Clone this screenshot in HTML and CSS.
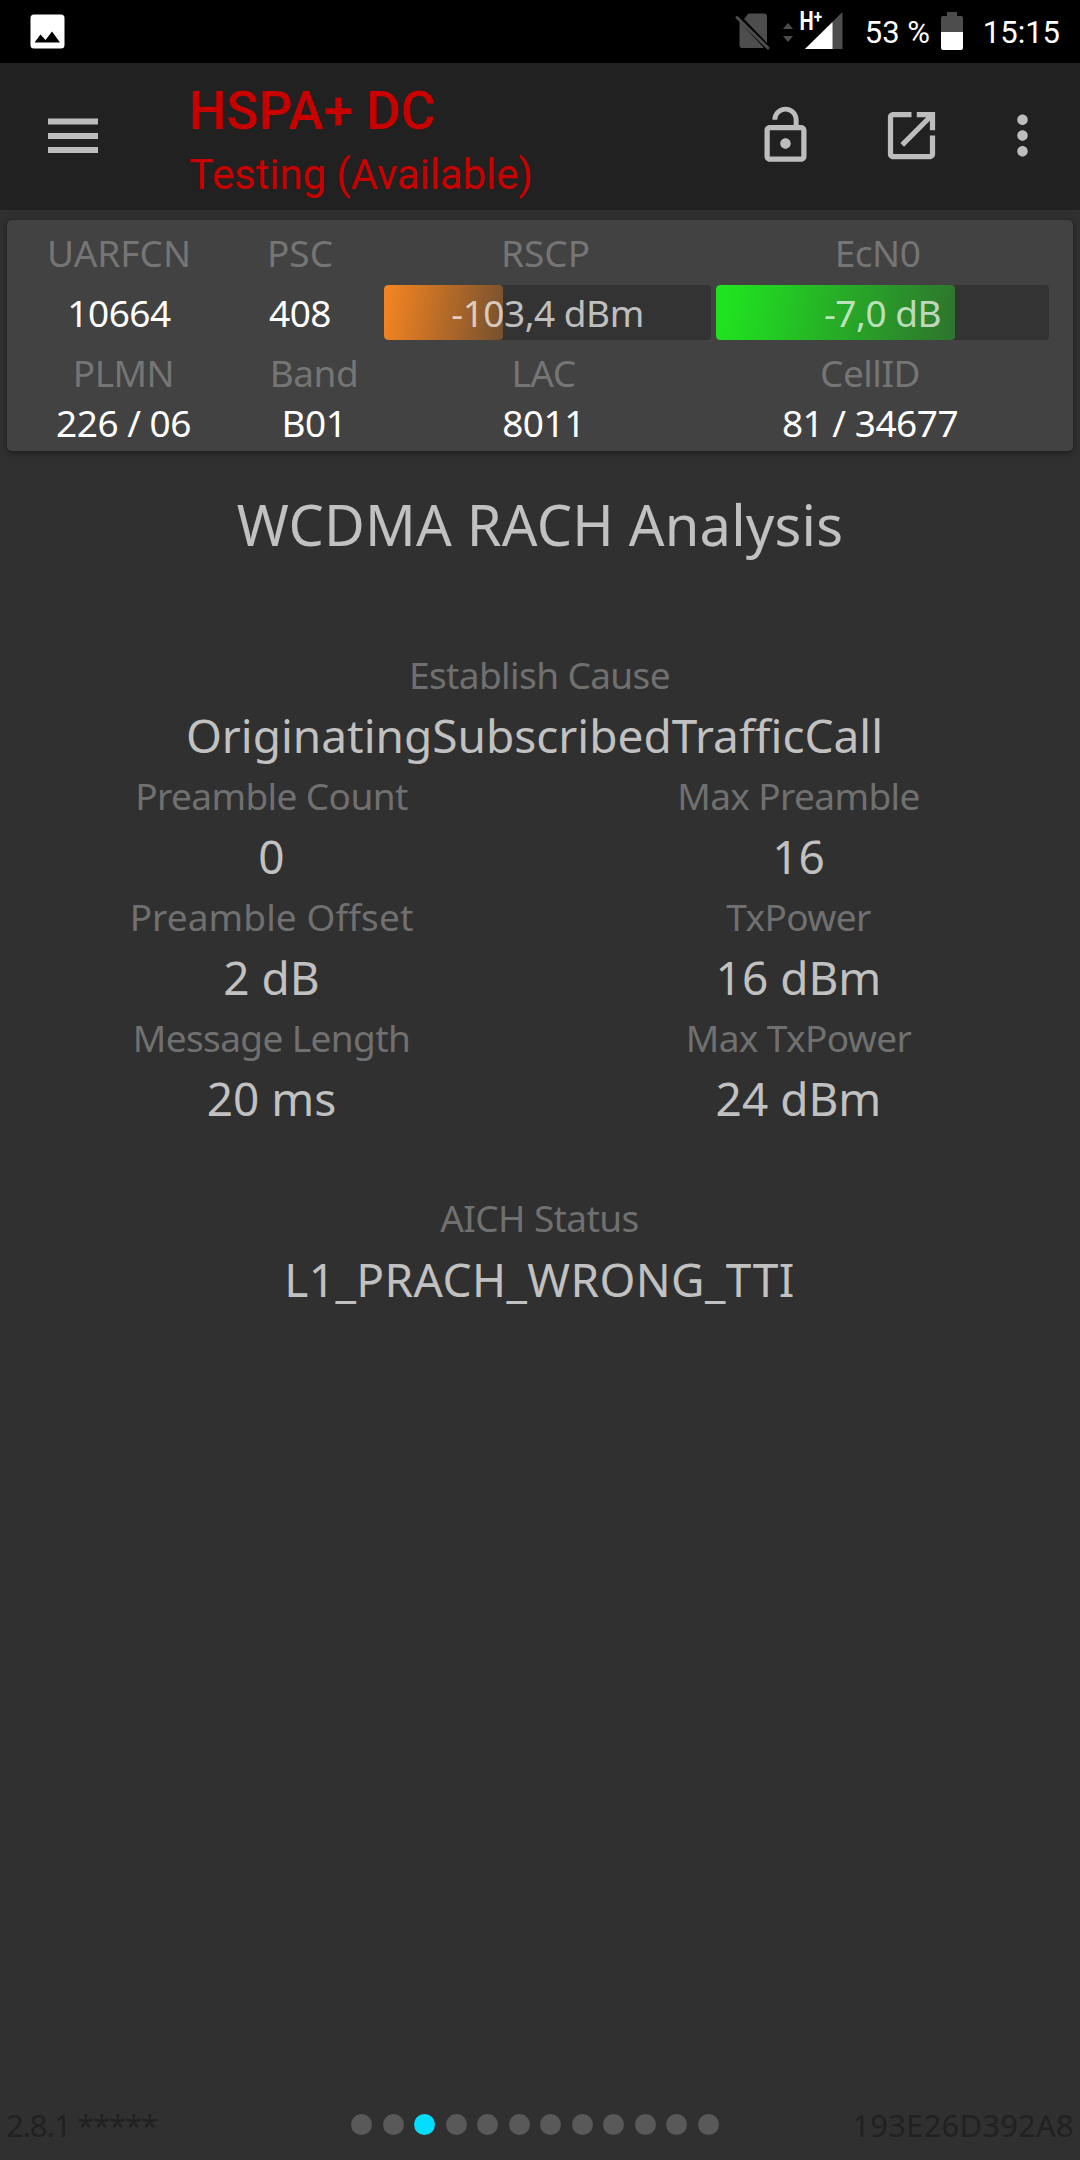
FILE: index.html
```
<!DOCTYPE html>
<html lang="en">

<head>
    <meta charset="UTF-8">
    <meta name="viewport" content="width=device-width, initial-scale=1.0">
    <title>WCDMA RACH Analysis</title>
    <link rel="stylesheet" href="styles.css">
</head>

<body>
    <div class="status-bar">
        <svg class="icon-image" width="36" height="36" viewBox="0 0 36 36">
            <path fill="#fff" fill-rule="evenodd" d="M4 .5h27a3.500 3.500 0 0 1 3.500 3.500v27a3.500 3.500 0 0 1-3.500 3.500H4A3.500 3.500 0 0 1 .5 31V4A3.500 3.500 0 0 1 4 .5zM4.500 28.500h25.500L22 17.500l-6.500 8.500-5-5.500z" />
        </svg>
        <div class="status-right">
            <svg class="icon-sim" width="36" height="38" viewBox="0 0 36 38">
                <path fill="#4d4d4d" d="M13.500 .5h15.500a3 3 0 0 1 3 3v26.500L9 6zM4.500 8.500v23.500a3 3 0 0 0 3 3h21.500z" />
                <path stroke="#4d4d4d" stroke-width="3" stroke-linecap="round" d="M2 4.500L33 35" />
            </svg>
            <svg class="icon-signal" width="60" height="38" viewBox="0 0 60 38">
                <path fill="#4d4d4d" d="M0 17l5-6 5 6zM0 24h10l-5 6z" />
                <path fill="#4d4d4d" d="M59.500 0v37H22z" />
                <path fill="#fff" d="M49.500 10v27H22z" />
                <text class="net-type" x="16.500" y="18" textLength="22.500" lengthAdjust="spacingAndGlyphs">H<tspan class="net-plus" dy="-7">+</tspan></text>
            </svg>
            <span class="battery-text">53 %</span>
            <svg class="icon-battery" width="22" height="38" viewBox="0 0 22 38">
                <path fill="#4d4d4d" d="M6 0h10v4h4a2 2 0 0 1 2 2v14H0V6a2 2 0 0 1 2-2h4z" />
                <path fill="#fff" d="M0 20h22v16a2 2 0 0 1-2 2H2a2 2 0 0 1-2-2z" />
            </svg>
            <span class="clock">15:15</span>
        </div>
    </div>

    <div class="toolbar">
        <svg class="icon-menu" width="50" height="36" viewBox="0 0 50 36">
            <path fill="#bdbdbd" d="M0 .5h50v6H0zM0 15h50v6H0zM0 29h50v6H0z" />
        </svg>
        <div class="toolbar-title">
            <div class="network">HSPA+ DC</div>
            <div class="state">Testing (Available)</div>
        </div>
        <div class="toolbar-actions">
            <svg width="63" height="63" viewBox="0 0 24 24">
                <path fill="#bdbdbd" d="M12 17c1.100 0 2-.9 2-2s-.9-2-2-2-2 .9-2 2 .9 2 2 2zm6-9h-1V6c0-2.760-2.240-5-5-5S7 3.240 7 6h1.900c0-1.710 1.390-3.100 3.100-3.100s3.100 1.390 3.100 3.100v2H6c-1.100 0-2 .9-2 2v10c0 1.100.9 2 2 2h12c1.100 0 2-.9 2-2V10c0-1.100-.9-2-2-2zm0 12H6V10h12v10z" />
            </svg>
            <svg width="63" height="63" viewBox="0 0 24 24">
                <path fill="#bdbdbd" d="M19 19H5V5h7V3H5c-1.110 0-2 .9-2 2v14c0 1.100.89 2 2 2h14c1.100 0 2-.9 2-2v-7h-2v7zM14 3v2h3.590l-9.830 9.830 1.410 1.410L19 6.410V10h2V3h-7z" />
            </svg>
            <svg width="63" height="63" viewBox="0 0 24 24">
                <path fill="#bdbdbd" d="M12 8c1.100 0 2-.9 2-2s-.9-2-2-2-2 .9-2 2 .9 2 2 2zm0 2c-1.100 0-2 .9-2 2s.9 2 2 2 2-.9 2-2-.9-2-2-2zm0 6c-1.100 0-2 .9-2 2s.9 2 2 2 2-.9 2-2-.9-2-2-2z" />
            </svg>
        </div>
    </div>

    <div class="card">
        <div class="row row-signal row-labels">
            <div class="label">UARFCN</div>
            <div class="label">PSC</div>
            <div class="label">RSCP</div>
            <div class="label">EcN0</div>
        </div>
        <div class="row row-signal row-bars">
            <div class="value">10664</div>
            <div class="value">408</div>
            <div class="bar">
                <div class="bar-fill orange" style="width: 36.4%"></div>
                <span class="bar-text">-103,4 dBm</span>
            </div>
            <div class="bar">
                <div class="bar-fill green" style="width: 71.8%"></div>
                <span class="bar-text">-7,0 dB</span>
            </div>
        </div>
        <div class="row row-cell">
            <div class="label">PLMN</div>
            <div class="label">Band</div>
            <div class="label">LAC</div>
            <div class="label">CellID</div>
        </div>
        <div class="row row-cell row-last">
            <div class="value">226 / 06</div>
            <div class="value">B01</div>
            <div class="value">8011</div>
            <div class="value">81 / 34677</div>
        </div>
    </div>

    <h1 class="heading">WCDMA RACH Analysis</h1>

    <div class="details">
        <div class="item wide cause">
            <div class="item-label">Establish Cause</div>
            <div class="item-value">OriginatingSubscribedTrafficCall</div>
        </div>
        <div class="item">
            <div class="item-label">Preamble Count</div>
            <div class="item-value">0</div>
        </div>
        <div class="item">
            <div class="item-label">Max Preamble</div>
            <div class="item-value">16</div>
        </div>
        <div class="item">
            <div class="item-label offset">Preamble Offset</div>
            <div class="item-value">2 dB</div>
        </div>
        <div class="item">
            <div class="item-label">TxPower</div>
            <div class="item-value">16 dBm</div>
        </div>
        <div class="item">
            <div class="item-label">Message Length</div>
            <div class="item-value">20 ms</div>
        </div>
        <div class="item">
            <div class="item-label">Max TxPower</div>
            <div class="item-value">24 dBm</div>
        </div>
        <div class="item wide aich">
            <div class="item-label">AICH Status</div>
            <div class="item-value">L1_PRACH_WRONG_TTI</div>
        </div>
    </div>

    <div class="footer">
        <span class="version">2.8.1 *****</span>
        <div class="dots">
            <i></i><i></i><i class="active"></i><i></i><i></i><i></i><i></i><i></i><i></i><i></i><i></i><i></i>
        </div>
        <span class="device">193E26D392A8</span>
    </div>
</body>

</html>
```
FILE: styles.css
```
* {
    box-sizing: border-box;
}

body {
    width: 1080px;
    height: 2160px;
    margin: 0;
    display: flex;
    flex-direction: column;
    background-color: #303030;
    font-family: "Noto Sans", sans-serif;
    font-variant-ligatures: none;
    overflow: hidden;
}

svg {
    display: block;
    flex: none;
}

/* status bar */
.status-bar {
    height: 63px;
    padding: 0 20px 0 30px;
    display: flex;
    justify-content: space-between;
    background-color: #000;
    color: #fff;
    font: 31px/65px Roboto, sans-serif;
    flex: none;
}

.icon-image {
    margin-top: 14px;
}

.status-right {
    display: flex;
}

.icon-sim {
    margin: 13px 12px 0 0;
}

.icon-signal {
    margin: 12px 22px 0 0;
    overflow: visible;
}

.net-type {
    fill: #fff;
    font: bold 25px Roboto, sans-serif;
}

.net-plus {
    font-size: 19px;
}

.battery-text {
    width: 76px;
}

.icon-battery {
    margin: 12px 20px 0 0;
}

/* toolbar */
.toolbar {
    height: 147px;
    padding: 0 26px 0 48px;
    display: flex;
    background-color: #212121;
    flex: none;
}

.icon-menu {
    margin-top: 55px;
}

.toolbar-title {
    margin-left: 91px;
    color: #c80000;
    font-family: Roboto, sans-serif;
    white-space: nowrap;
}

.network {
    margin-top: 16px;
    font-size: 53px;
    font-weight: 500;
    line-height: 64px;
}

.state {
    font-size: 42px;
    line-height: 64px;
    letter-spacing: -0.1px;
}

.toolbar-actions {
    margin-left: auto;
    margin-top: 41px;
    display: flex;
}

.toolbar-actions svg + svg {
    margin-left: 63px;
}

.toolbar-actions svg:last-child {
    margin-left: 48px;
}

/* cell info card */
.card {
    margin: 10px 7px 0;
    height: 231px;
    padding-top: 10px;
    background-color: #424242;
    border-radius: 5px;
    box-shadow: 0 2px 6px rgba(0, 0, 0, 0.45);
    font-size: 37px;
    letter-spacing: -0.5px;
    text-align: center;
    flex: none;
}

.row {
    display: grid;
    height: 45px;
    line-height: 45px;
    margin-bottom: 10px;
}

.row-signal {
    grid-template-columns: 224px 153px 327px 5px 333px;
}

.row-signal > :nth-child(2) {
    padding-right: 15px;
}

.row-signal > :nth-child(4) {
    grid-column: 5;
}

.row-labels {
    letter-spacing: 0;
}

.row-labels > :nth-child(3) {
    padding-right: 4px;
}

.row-labels > :nth-child(4) {
    padding-right: 10px;
    letter-spacing: -0.5px;
}

.row-bars {
    height: 55px;
    line-height: 55px;
}

.row-cell {
    grid-template-columns: 233px 148px 311px 342px;
}

.row-last {
    margin-top: -5px;
}

.label {
    color: #757575;
}

.value {
    color: #fff;
}

.bar {
    position: relative;
    background-color: #333;
    border-radius: 4px;
    overflow: hidden;
}

.bar-fill {
    position: absolute;
    top: 0;
    left: 0;
    height: 100%;
    border-radius: 4px;
}

.orange {
    background: linear-gradient(100deg, #f28321 5%, #74502f);
}

.green {
    background: linear-gradient(100deg, #20e320 5%, #2e732e);
}

.bar-text {
    position: relative;
    color: rgba(255, 255, 255, 0.7);
}

/* content */
.heading {
    margin: 35px 0 0;
    color: #c1c1c1;
    font-size: 56px;
    font-weight: 400;
    line-height: 76px;
    letter-spacing: 0.2px;
    text-align: center;
    flex: none;
}

.details {
    margin: 86px 18px 0 8px;
    display: grid;
    grid-template-columns: 1fr 1fr;
    text-align: center;
}

.item-label {
    color: #707070;
    font-size: 37px;
    line-height: 54px;
    letter-spacing: -0.6px;
}

.offset {
    letter-spacing: 0.1px;
}

.item-value {
    color: #c1c1c1;
    font-size: 46px;
    line-height: 67px;
}

.wide {
    grid-column: 1 / 3;
}

.cause,
.aich {
    padding-left: 9px;
}

.cause .item-value {
    padding-right: 10px;
}

.aich {
    margin-top: 59px;
}

.aich .item-value {
    line-height: 69px;
    letter-spacing: 0.4px;
}

/* footer */
.footer {
    margin-top: auto;
    height: 71px;
    padding: 0 6px;
    display: grid;
    grid-template-columns: 345px 368px 1fr;
    align-items: center;
    color: #212121;
    font-size: 31px;
}

.version {
    letter-spacing: -1.1px;
}

.device {
    text-align: right;
    letter-spacing: 0.2px;
}

.dots {
    display: flex;
    gap: 10.5px;
}

.dots i {
    width: 21px;
    height: 21px;
    border-radius: 50%;
    background-color: #595959;
}

.dots .active {
    background-color: #00ddff;
}
```
